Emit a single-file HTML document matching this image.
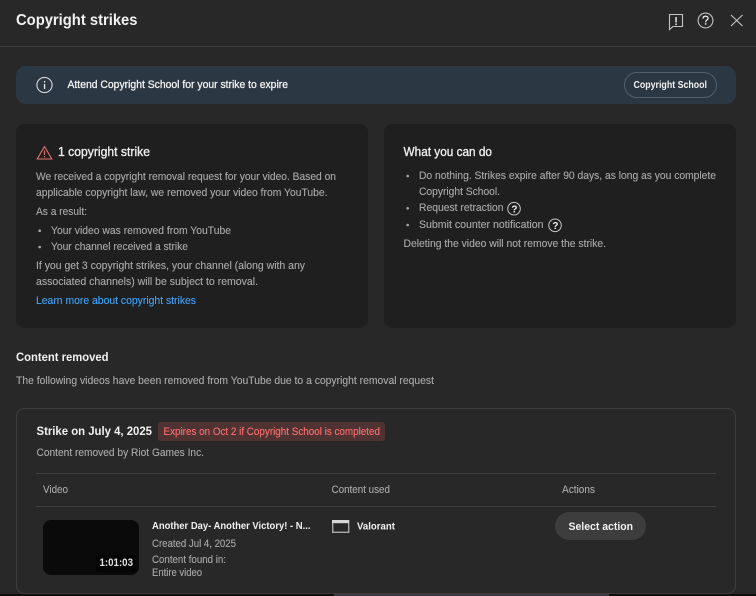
<!DOCTYPE html>
<html><head><meta charset="utf-8"><style>
html,body{margin:0;padding:0;background:#282828;width:756px;height:596px;overflow:hidden}
svg{display:block}
text{font-family:"Liberation Sans",sans-serif;font-size:11px;fill:#aaaaaa;stroke:#aaaaaa;stroke-width:.12px;white-space:pre}
.w{fill:#f1f1f1;stroke:none;font-weight:bold}
.m{fill:#f1f1f1;stroke:#f1f1f1;stroke-width:.3px}
</style></head><body>
<svg width="756" height="596" viewBox="0 0 756 596" xmlns="http://www.w3.org/2000/svg">
<rect width="756" height="596" fill="#282828"/>
<rect x="0" y="46" width="756" height="1" fill="#3e3e3e"/>
<text x="16" y="25" class="w" style="font-size:16px" textLength="121.5" lengthAdjust="spacingAndGlyphs">Copyright strikes</text>
<!-- header icons -->
<path d="M669.5 14.5H682.5V26.5H673L669.5 29.5Z" fill="none" stroke="#c4c4c4" stroke-width="1.1"/>
<rect x="675.3" y="17" width="1.5" height="5.5" fill="#e8e8e8"/><rect x="675.3" y="23.5" width="1.5" height="1.6" fill="#e8e8e8"/>
<circle cx="705.5" cy="20.5" r="7.4" fill="none" stroke="#c4c4c4" stroke-width="1.1"/>
<path d="M703 18.6C703 17 704.1 16.2 705.6 16.2C707.1 16.2 708.1 17.1 708.1 18.3C708.1 19.9 705.6 20 705.6 22.2" fill="none" stroke="#e8e8e8" stroke-width="1.3"/>
<rect x="704.9" y="23.2" width="1.5" height="1.5" fill="#e8e8e8"/>
<path d="M731 15L742.5 26M742.5 15L731 26" fill="none" stroke="#c8c8c8" stroke-width="1.1"/>
<!-- banner -->
<rect x="16" y="66" width="720" height="38" rx="10" fill="#2b3743"/>
<circle cx="44.5" cy="85" r="7.6" fill="none" stroke="#d8d8d8" stroke-width="1.1"/>
<rect x="43.9" y="84" width="1.3" height="5" fill="#eee"/><rect x="43.9" y="81" width="1.3" height="1.5" fill="#eee"/>
<text x="67.5" y="88" class="m" textLength="220.5" lengthAdjust="spacingAndGlyphs">Attend Copyright School for your strike to expire</text>
<rect x="624.5" y="72.5" width="92" height="25" rx="12.5" fill="none" stroke="#53606c"/>
<text x="633.5" y="88" class="w" style="font-size:10.5px" textLength="73.5" lengthAdjust="spacingAndGlyphs">Copyright School</text>
<!-- cards -->
<rect x="16" y="124" width="352" height="204" rx="8" fill="#1f1f1f"/>
<rect x="384" y="124" width="352" height="204" rx="8" fill="#1f1f1f"/>
<path d="M44.5 146.5L51.8 159H37.2Z" fill="none" stroke="#e0726d" stroke-width="1.1"/>
<rect x="43.9" y="150.5" width="1.2" height="4.5" fill="#e0726d"/><rect x="43.9" y="156" width="1.2" height="1.3" fill="#e0726d"/>
<text x="58" y="156" class="m" style="font-size:12.5px" textLength="92" lengthAdjust="spacingAndGlyphs">1 copyright strike</text>
<text x="36" y="180" textLength="300" lengthAdjust="spacingAndGlyphs">We received a copyright removal request for your video. Based on</text>
<text x="36" y="196" textLength="291.5" lengthAdjust="spacingAndGlyphs">applicable copyright law, we removed your video from YouTube.</text>
<text x="36" y="215" textLength="51" lengthAdjust="spacingAndGlyphs">As a result:</text>
<circle cx="39.7" cy="230.7" r="1.3" fill="#aaa"/>
<text x="51" y="234" textLength="180" lengthAdjust="spacingAndGlyphs">Your video was removed from YouTube</text>
<circle cx="39.7" cy="247" r="1.3" fill="#aaa"/>
<text x="51" y="250" textLength="137" lengthAdjust="spacingAndGlyphs">Your channel received a strike</text>
<text x="36" y="269" textLength="269" lengthAdjust="spacingAndGlyphs">If you get 3 copyright strikes, your channel (along with any</text>
<text x="36" y="285" textLength="222" lengthAdjust="spacingAndGlyphs">associated channels) will be subject to removal.</text>
<text x="36" y="304" style="fill:#3ea6ff;stroke:#3ea6ff" textLength="160" lengthAdjust="spacingAndGlyphs">Learn more about copyright strikes</text>
<text x="403.5" y="156" class="m" style="font-size:12.5px" textLength="88.5" lengthAdjust="spacingAndGlyphs">What you can do</text>
<circle cx="407.7" cy="176" r="1.3" fill="#aaa"/>
<text x="419" y="179" textLength="297" lengthAdjust="spacingAndGlyphs">Do nothing. Strikes expire after 90 days, as long as you complete</text>
<text x="419" y="195" textLength="81" lengthAdjust="spacingAndGlyphs">Copyright School.</text>
<circle cx="407.7" cy="208.3" r="1.3" fill="#aaa"/>
<text x="419" y="211" textLength="84.5" lengthAdjust="spacingAndGlyphs">Request retraction</text>
<circle cx="514" cy="208.7" r="6.3" fill="none" stroke="#c4c4c4"/>
<text x="511.4" y="212.3" class="w" style="font-size:10px">?</text>
<circle cx="407.7" cy="225" r="1.3" fill="#aaa"/>
<text x="419" y="228" textLength="124.5" lengthAdjust="spacingAndGlyphs">Submit counter notification</text>
<circle cx="555" cy="225.3" r="6.3" fill="none" stroke="#c4c4c4"/>
<text x="552.4" y="228.9" class="w" style="font-size:10px">?</text>
<text x="403.5" y="247" textLength="202.5" lengthAdjust="spacingAndGlyphs">Deleting the video will not remove the strike.</text>
<!-- content removed -->
<text x="16" y="361" class="w" style="font-size:12px" textLength="92.5" lengthAdjust="spacingAndGlyphs">Content removed</text>
<text x="16" y="384" textLength="418" lengthAdjust="spacingAndGlyphs">The following videos have been removed from YouTube due to a copyright removal request</text>
<rect x="16.5" y="408.5" width="719" height="185" rx="8" fill="none" stroke="#3e3e3e"/>
<rect x="0" y="594" width="756" height="2" fill="#0d0d0d"/>
<rect x="334" y="594" width="275" height="2" fill="#3c3840"/>
<text x="36.5" y="435" class="w" style="font-size:12px" textLength="115.5" lengthAdjust="spacingAndGlyphs">Strike on July 4, 2025</text>
<rect x="158" y="422" width="227" height="19" rx="3" fill="#4f3333"/>
<text x="163.5" y="435" style="fill:#ff7070;stroke:#ff7070" textLength="216.5" lengthAdjust="spacingAndGlyphs">Expires on Oct 2 if Copyright School is completed</text>
<text x="36.5" y="456" textLength="167.5" lengthAdjust="spacingAndGlyphs">Content removed by Riot Games Inc.</text>
<rect x="36" y="473" width="680" height="1" fill="#3e3e3e"/>
<text x="43" y="493" textLength="25" lengthAdjust="spacingAndGlyphs">Video</text>
<text x="331.5" y="493" textLength="58.5" lengthAdjust="spacingAndGlyphs">Content used</text>
<text x="562" y="493" textLength="33" lengthAdjust="spacingAndGlyphs">Actions</text>
<rect x="36" y="506" width="680" height="1" fill="#3e3e3e"/>
<rect x="43" y="520" width="96" height="55" rx="8" fill="#0a0a0a"/>
<rect x="96" y="555" width="40" height="17" rx="3" fill="#050505"/>
<text x="99.5" y="566" class="w" style="fill:#e0e0e0;font-size:11px" textLength="33.5" lengthAdjust="spacingAndGlyphs">1:01:03</text>
<text x="152" y="529" class="w" style="font-size:10.5px" textLength="158.5" lengthAdjust="spacingAndGlyphs">Another Day- Another Victory! - N...</text>
<text x="152" y="547" textLength="84" lengthAdjust="spacingAndGlyphs">Created Jul 4, 2025</text>
<text x="152" y="563" textLength="74" lengthAdjust="spacingAndGlyphs">Content found in:</text>
<text x="152" y="576" textLength="50" lengthAdjust="spacingAndGlyphs">Entire video</text>
<rect x="332.7" y="520.7" width="16" height="11.6" fill="none" stroke="#a8a8a8" stroke-width="1.4"/>
<rect x="332" y="520" width="17" height="3.2" fill="#d8d8d8"/>
<text x="357" y="529.5" class="w" style="font-size:10.5px" textLength="38" lengthAdjust="spacingAndGlyphs">Valorant</text>
<rect x="555" y="512" width="91" height="28" rx="14" fill="#3d3d3d"/>
<text x="568.5" y="530" class="w" style="font-size:11px" textLength="64.5" lengthAdjust="spacingAndGlyphs">Select action</text>
</svg>
</body></html>
